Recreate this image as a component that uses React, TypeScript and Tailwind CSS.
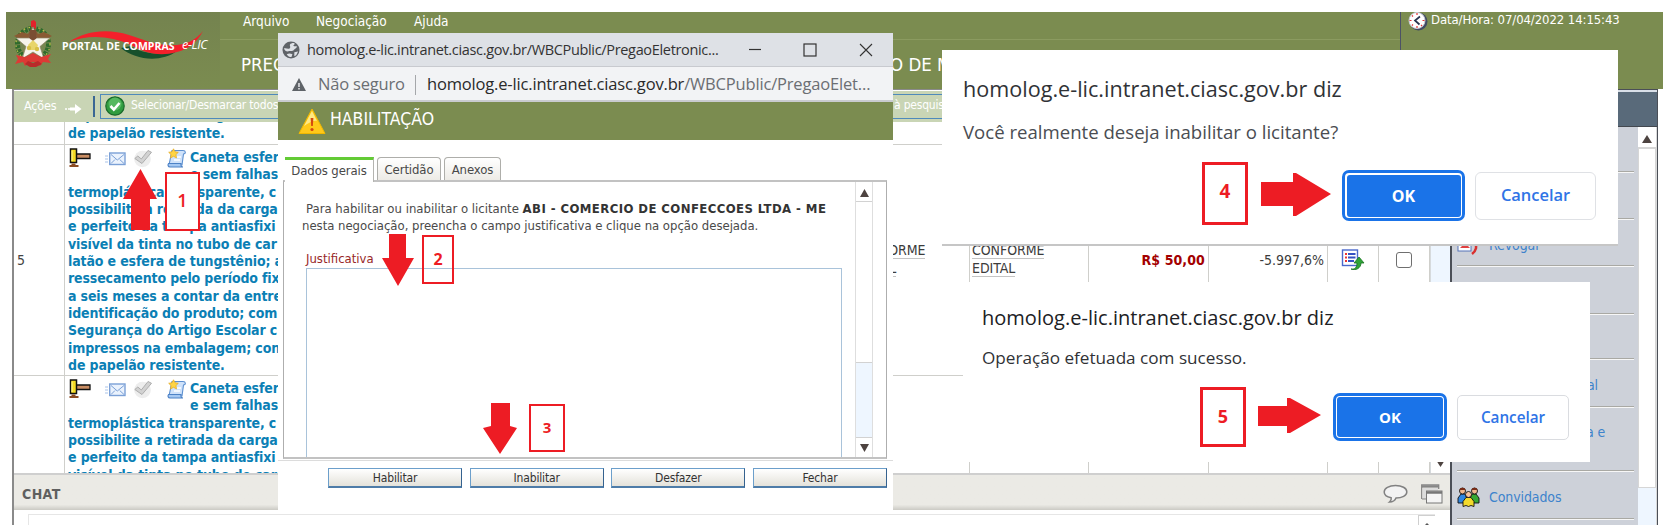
import React from "react";

const tahoma = "font-['DejaVu_Sans_Condensed','Liberation_Sans',sans-serif]";
const segoe = "font-['Open_Sans','Noto_Sans',sans-serif]";

function Crest() {
  return (
    <svg width="42" height="50" viewBox="0 0 42 50">
      <circle cx="20" cy="25" r="15.5" fill="none" stroke="#2f6b2c" strokeWidth="5" strokeDasharray="3 1" />
      <circle cx="20" cy="25" r="17" fill="none" stroke="#b9c04a" strokeWidth="1.3" strokeDasharray="1.5 3.5" />
      <path d="M18 8V2l3-1 2 2v7z" fill="#e3202b" />
      <path d="M1 17l8-4 6 2 5-8 5 8 6-2 8 4-9 5-3 3H12l-3-4z" fill="#8a5a33" />
      <path d="M20 8l4 11L37 19 27 27.500 31 40 20 33 9 40 13 27.500 3 19l13 0z" fill="#f7f4ea" stroke="#8c8467" strokeWidth=".7" />
      <path d="M17 11h6l1 8-4 3-4-3z" fill="#7a4d33" />
      <path d="M20 21l5 5-2 5h-6l-2-5z" fill="#e8d56a" />
      <circle cx="16" cy="29" r="2.200" fill="#d6bf45" />
      <circle cx="24" cy="30" r="2.200" fill="#d6bf45" />
      <path d="M3 36l9 2 8-4 8 4 10-3-3 5 3 4-8-1-3 4-4-4h-6l-5 4-2-4-8 2 3-5z" fill="#dd3a35" />
      <path d="M12 45l3-3 5 2 5-2 4 3-6 3h-6z" fill="#b92a2a" />
    </svg>
  );
}

function Logo() {
  return (
    <div className="flex h-[77px] w-[214px] shrink-0 bg-gradient-to-b from-[#74834f] to-[#7b8c50] pl-[7px] pt-[7px]">
      <Crest />
      <div className="relative mt-[8px] h-[42px] w-[160px]">
        <svg className="absolute left-0 top-0" width="160" height="42" viewBox="0 0 160 42">
          <path d="M66 21c14 12 40 15 56 3-12 4-34 4-46-5z" fill="#17502c" />
          <path d="M14 15C30 4 52 1 74 8c18 6 34 13 54 9 9-2 15-7 20-13-6 11-14 18-26 21-18 5-32 1-46-7C56 9 34 7 14 15z" fill="#f3202b" />
        </svg>
        <span className="absolute left-[7px] top-[12px] whitespace-nowrap font-['Open_Sans',sans-serif] text-[10.500px] font-bold leading-[14px] tracking-[0.050px] text-white">PORTAL DE COMPRAS</span>
        <span className="absolute left-[127px] top-[11px] whitespace-nowrap font-['Open_Sans',sans-serif] text-[12.500px] font-medium italic leading-[14px] tracking-[-0.300px] text-white">e-LIC</span>
      </div>
    </div>
  );
}

function Header() {
  return (
    <header className="ml-[6px] flex h-[77px] w-[1657px] bg-[#7b8c50] text-white">
      <Logo />
      <div className="w-[1180px]">
        <nav className="flex h-[28px] items-start border-b border-[#8b9b60] pl-[23px] text-[13.500px] leading-[18px]">
          <span className="w-[73px]">Arquivo</span>
          <span className="w-[98px]">Negociação</span>
          <span>Ajuda</span>
        </nav>
        <div className="flex pl-[21px] pt-[13px] text-[18.500px] leading-[24px]">
          <span className="w-[649px]">PREG</span>
          <span>O DE M</span>
        </div>
      </div>
      <div className="flex h-[38px] border-l border-[#4c5166]">
        <div className="flex h-[18px] items-start pl-[7px]">
          <svg width="20" height="20" viewBox="0 0 20 20">
            <circle cx="10.500" cy="9.500" r="9" fill="#414a63" />
            <circle cx="9" cy="8.500" r="8" fill="#fff" stroke="#c9ced8" />
            <path d="M12 4.500L7 8.500l4.500 4" fill="none" stroke="#27324e" strokeWidth="1.700" />
            <path d="M9 1v2M9 14v2M1.500 8.500h2M14.500 8.500h2M4 3.500l1 1M13 13l1 1M4 13.500l1-1" stroke="#e23333" strokeWidth="1.200" />
          </svg>
          <span className="whitespace-nowrap pl-[3px] text-[13px] leading-[16px] tracking-[-0.080px]">Data/Hora: 07/04/2022 14:15:43</span>
        </div>
      </div>
    </header>
  );
}

function Toolbar() {
  return (
    <div className="flex h-[31px] w-full shrink-0 items-center bg-[#c9d5b5] pb-[1px] text-[12.500px] text-white">
      <span className="w-[51px] pl-[10px] tracking-[-0.200px]">Ações</span>
      <svg className="mt-[6px]" width="17" height="12" viewBox="0 0 17 12">
        <path d="M0 6h2M3 6h2" stroke="#fff" strokeWidth="1.500" />
        <path d="M5 4.500h5V1l6.500 5L10 11V7.500H5z" fill="#fff" />
      </svg>
      <span className="ml-[11px] h-[21px] w-[2px] bg-[#3b6794]" />
      <div className="ml-[5px] flex h-[25px] grow items-center border border-[#4f8abb] pl-[4px]">
        <svg width="20" height="20" viewBox="0 0 20 20">
          <circle cx="10" cy="10" r="9.200" fill="#2f9c3f" stroke="#1b6a2b" strokeWidth="1.200" />
          <circle cx="10" cy="8" r="6.500" fill="#67c46f" opacity=".7" />
          <path d="M5.500 10l3.300 3.500L14.500 7" fill="none" stroke="#fff" strokeWidth="2.600" />
        </svg>
        <span className="mb-[3px] ml-[6px] w-[763px] whitespace-nowrap text-[12px] tracking-[-0.200px]">Selecionar/Desmarcar todos</span>
        <span className="mb-[2px] whitespace-nowrap text-[12px] tracking-[-0.200px]">à pesquis</span>
      </div>
    </div>
  );
}

function RowIcons() {
  return (
    <div className="flex w-[122px] shrink-0 items-start">
      <svg className="-mt-[1px]" width="25" height="21" viewBox="0 0 25 21">
        <path d="M8 6h14v4.500H8z" fill="#c98d63" stroke="#111" strokeWidth="1.300" />
        <path d="M2.500 1h6v13.500h-6z" fill="#f6dc23" stroke="#111" strokeWidth="1.500" />
        <path d="M4 2.500v10.500" stroke="#fff8a0" strokeWidth="1" />
        <path d="M3.500 15.500h4v1.500h3v2h-9v-2h2z" fill="#8a4a21" />
      </svg>
      <svg className="ml-[12px] mt-[3px]" width="21" height="14" viewBox="0 0 21 14">
        <path d="M0 4h3M0 7h3M0 10h3" stroke="#a9c4ea" strokeWidth="1.200" />
        <rect x="4.700" y="1" width="15.300" height="11.500" fill="#eaf2fd" stroke="#7ba0d6" strokeWidth="1.400" />
        <path d="M6 2.500l6.300 5.500L19 2.500M6 11.500l4-4M19 11.500l-4.300-4" fill="none" stroke="#7ba0d6" />
      </svg>
      <svg className="ml-[7px]" width="20" height="19" viewBox="0 0 20 19">
        <circle cx="9.500" cy="10" r="8.300" fill="#ededed" />
        <path d="M1.800 9.500l3-2.500 3.500 3L15 1.500l3.500 1.800L9 14.500z" fill="#d2d2d2" stroke="#adadad" />
      </svg>
      <svg className="-mt-[1px] ml-[14px]" width="20" height="20" viewBox="0 0 20 20">
        <path d="M5 2.500h11c3 0 3 3.500.5 3.500L15 17H2z" fill="#cfe2fa" stroke="#5b8fd0" strokeWidth="1.100" />
        <path d="M1.500 15.500h12.500c-.5 2 .5 3.500 2 3.500H3c-2 0-2.500-2-1.500-3.500z" fill="#a5c8f2" stroke="#4d82c6" strokeWidth="1.100" />
        <path d="M8 9h6M7 12h6" stroke="#fff" strokeWidth="1.300" />
        <path d="M6.500.8l1.500 3 3.300.5-2.400 2.300.6 3.300-3-1.600-3 1.600.6-3.300L1.700 4.300 5 3.800z" fill="#ffd544" stroke="#e5ac26" strokeWidth=".8" />
      </svg>
    </div>
  );
}

const longLines = [
  "possibilite a retirada da carga",
  "e perfeito da tampa antiasfixi",
  "visível da tinta no tubo de car",
  "latão e esfera de tungstênio; a",
  "ressecamento pelo período fix",
  "a seis meses a contar da entre",
  "identificação do produto; com",
  "Segurança do Artigo Escolar c",
  "impressos na embalagem; con",
  "de papelão resistente.",
];

const itemText = "text-[14px] font-bold leading-[17.330px] tracking-[-0.140px] text-[#0b7fb5] whitespace-nowrap";

function Description({ lines }: { lines: string[] }) {
  return (
    <div className={`${itemText} pl-[3px] pt-[4px]`}>
      <div className="flex">
        <RowIcons />
        <div>
          <div>Caneta esfer</div>
          <div>e sem falhas</div>
        </div>
      </div>
      <div>termoplástica transparente, c</div>
      {lines.map((l) => (
        <div key={l}>{l}</div>
      ))}
    </div>
  );
}

const gridCols = "grid grid-cols-[51px_786px_119px_119px_120px_119px_51px_51px]";
const cell = "border-r border-[#cfcfcb]";

function Underlined() {
  return (
    <div className="flex flex-col items-start pl-[2px] text-[14px] leading-[14px] tracking-[-0.050px] text-[#3c3c3c]">
      <span className="border-b border-[#c4c4c4] pb-[1px]">CONFORME</span>
      <span className="mt-[2px] border-b border-[#c4c4c4] pb-[1px]">EDITAL</span>
    </div>
  );
}

function Table() {
  return (
    <div className="flex h-[351px] shrink-0">
      <div className="w-[1416px] overflow-hidden">
        <div className={`${gridCols} h-[23px] border-b border-[#cfcfcb]`}>
          <div className={cell} />
          <div className={`flex h-[22px] flex-col justify-end overflow-hidden border-r border-[#cfcfcb] pb-[2px] pl-[3px] ${itemText}`}>
            <div>impressos na embalagem; con</div>
            <div>de papelão resistente.</div>
          </div>
          {[0, 1, 2, 3, 4, 5].map((i) => (
            <div key={i} className={cell} />
          ))}
        </div>
        <div className={`${gridCols} h-[231px] border-b border-[#cfcfcb]`}>
          <div className={`${cell} flex items-center pl-[3px] text-[14px] text-[#444]`}>5</div>
          <div className={cell}>
            <Description lines={longLines} />
          </div>
          <div className={`${cell} flex items-center`}>
            <Underlined />
          </div>
          <div className={`${cell} flex items-center`}>
            <Underlined />
          </div>
          <div className={`${cell} flex items-center justify-end pr-[3px] text-[14px] font-bold tracking-[0.100px] text-[#a30000]`}>R$ 50,00</div>
          <div className={`${cell} flex items-center justify-end pr-[3px] text-[14px] text-[#3c3c3c]`}>-5.997,6%</div>
          <div className={`${cell} flex items-center justify-center pb-[2px]`}>
            <svg width="24" height="21" viewBox="0 0 24 21">
              <rect x="1.500" y="1" width="15" height="15.500" fill="#fff" stroke="#4a68cc" strokeWidth="1.400" />
              <path d="M4 5h2M4 8.500h2M4 12h2" stroke="#e33" strokeWidth="1.800" />
              <path d="M7 5h7.500M7 8.500h7.500M7 12h6" stroke="#3451c4" strokeWidth="1.800" />
              <path d="M10 20c4 .5 6-1.500 6-6h-3l5-6 5 6h-3c0 5-5 8-10 6z" fill="#2fa437" stroke="#17701f" strokeWidth=".8" />
            </svg>
          </div>
          <div className={`${cell} flex items-center justify-center`}>
            <span className="h-[16px] w-[16px] rounded-[3px] border-[1.500px] border-[#6f6f6f] bg-white" />
          </div>
        </div>
        <div className={`${gridCols} h-[97px] overflow-hidden`}>
          <div className={cell} />
          <div className="h-[97px] overflow-hidden border-r border-[#cfcfcb]">
            <Description lines={longLines.slice(0, 3)} />
          </div>
          {[0, 1, 2, 3, 4, 5].map((i) => (
            <div key={i} className={cell} />
          ))}
        </div>
      </div>
      <div className="flex w-[20px] flex-col justify-end border-l border-[#d6dadd] bg-[#eef6ff]">
        <div className="flex h-[20px] items-center justify-center bg-white">
          <svg width="9" height="7" viewBox="0 0 9 7"><path d="M0 0h9L4.500 7z" fill="#4d4340" /></svg>
        </div>
      </div>
    </div>
  );
}

function Chat() {
  return (
    <>
      <div className="flex h-[37px] shrink-0 items-center border-t-2 border-[#cfcfcf] bg-gradient-to-b from-[#ebeae5] from-85% to-[#cbcac4] pl-[8px] pr-[7px] pt-[2px]">
        <span className="grow pt-[2px] text-[14px] font-bold tracking-[0.400px] text-[#5f5f5f]">CHAT</span>
        <svg width="25" height="20" viewBox="0 0 25 20">
          <path d="M12.500 1.500C6 1.500 1.200 4.200 1.200 8c0 3 3 5 7 5.800.4 2-.7 3.400-1.700 4.200 3 0 5.500-1.500 6.500-4C19 14 23.800 11.500 23.800 8c0-4-5-6.500-11.300-6.500z" fill="#f3f3f3" stroke="#818181" strokeWidth="1.500" />
        </svg>
        <svg className="ml-[13px]" width="22" height="20" viewBox="0 0 22 20">
          <path d="M.7 15V1h17v4" fill="none" stroke="#868686" strokeWidth="1.300" />
          <path d="M1 2.500h17" stroke="#868686" strokeWidth="2.200" />
          <path d="M1.500 4h15.500v3H5v8H1.500z" fill="#dcdcdc" />
          <path d="M1 15h4" stroke="#868686" />
          <rect x="5.500" y="7" width="15.500" height="12" fill="#f4f4f4" stroke="#777" />
          <path d="M5.500 8.500H21" stroke="#777" strokeWidth="2.500" />
        </svg>
      </div>
      <div className="ml-[14px] mt-[4px] flex h-[11px] w-[1407px] justify-end overflow-hidden border-l border-t border-[#e6e6e6]">
        <div className="flex w-[17px] items-end justify-center border-l border-t border-[#cfcfcf]">
          <svg width="4" height="2" viewBox="0 0 4 2"><path d="M2 0l2 2H0z" fill="#555" /></svg>
        </div>
      </div>
    </>
  );
}

const sep = "border-b border-[#a9a9a4] shadow-[0_1px_0_#f7f7f7]";

function SideMenu() {
  return (
    <aside className="flex h-[436px] w-[208px] shrink-0 flex-col border-l-2 border-r-[1px] border-t border-[#4b4f57]">
      <div className="h-[37px] shrink-0 border-b border-t-2 border-b-[#43484f] border-t-[#d9dfe8] bg-[#596a7a]" />
      <div className="flex grow overflow-hidden">
        <div className="w-[186px] bg-[#cdd1d9] pl-[5px] pr-[4px] text-[14px] tracking-[-0.100px] text-[#3d83cc]">
          <div className={`h-[45px] ${sep}`} />
          <div className={`h-[47px] ${sep}`} />
          <div className={`flex h-[47px] items-center pt-[7px] ${sep}`}>
            <svg width="22" height="20" viewBox="0 0 22 20">
              <rect x="1" y="1" width="13" height="14" fill="#fff" stroke="#5573b8" />
              <path d="M3 12l5-5 5 5z" fill="#e04040" />
              <path d="M17 5c4 5 2 10-2 13" fill="none" stroke="#d9302f" strokeWidth="2.500" />
            </svg>
            <span className="pl-[10px]">Revogar</span>
          </div>
          <div className={`h-[48px] ${sep}`} />
          <div className={`h-[45px] ${sep}`} />
          <div className={`flex h-[48px] items-center pl-[130px] pt-[5px] ${sep}`}>al</div>
          <div className={`flex h-[64px] items-center whitespace-nowrap pl-[129px] pb-[13px] ${sep}`}>a e</div>
          <div className={`flex h-[48px] items-center pt-[4px] ${sep}`}>
            <svg width="23" height="20" viewBox="0 0 23 20">
              <g stroke="#111" strokeWidth=".9">
                <path d="M1 16v-5l3-4h4l2 5v4z" fill="#2e86e0" />
                <path d="M13 16v-5l2-4h4l3 4v5z" fill="#37a834" />
                <circle cx="5.500" cy="4" r="3" fill="#f2b78c" />
                <circle cx="17.500" cy="4" r="3" fill="#f2b78c" />
                <path d="M6 19.500v-5l3-4h5l3 4v5l-3-1-2.500 1-2.500-1z" fill="#f3da2c" />
                <circle cx="11.500" cy="7.500" r="3" fill="#f6c39b" />
              </g>
              <path d="M2.500 3C3 0 8 0 8.500 3zM14.500 3c.5-3 5.500-3 6 0z" fill="#7a2c16" />
            </svg>
            <span className="pl-[9px] pt-[1px]">Convidados</span>
          </div>
        </div>
        <div className="flex w-[19px] flex-col border-r border-[#dadada] bg-[#eef6ff]">
          <div className="flex h-[20px] items-center justify-center bg-white pt-[3px]">
            <svg width="10" height="8" viewBox="0 0 10 8"><path d="M5 0l5 8H0z" fill="#4d4340" /></svg>
          </div>
          <div className="h-[341px] border border-t-2 border-[#d6d6d6] bg-white" />
        </div>
      </div>
    </aside>
  );
}

function PopupButton({ label }: { label: string }) {
  return (
    <button className="h-[20px] w-[134px] border border-b-2 border-[#6c9fcb] border-b-[#4e7ca8] border-r-[#35628f] bg-gradient-to-b from-white to-[#e4e2da] text-[12px] leading-[19px] tracking-[-0.150px] text-[#333]">
      {label}
    </button>
  );
}

function Popup() {
  return (
    <section className="absolute left-[278px] top-[33px] flex h-[480px] w-[615px] flex-col bg-white">
      <div className={`flex h-[34px] shrink-0 items-center border-b border-[#c8cacf] bg-[#dee1e6] pl-[4px] pr-[20px] ${segoe}`}>
        <svg width="18" height="18" viewBox="0 0 19 19">
          <circle cx="9.500" cy="9.500" r="9" fill="#5f6368" />
          <path d="M2 8c2-1 4 1 6 0 2-2-1-3 1-5 1-1 3-1 4-1 1 2-1 2-1 3 1 1 3 0 4 1-1 2-3 2-4 4-2 1-4 0-6 1-2 0-3-1-4-3zM5 14c2-1 4-1 6 0l-1 3c-2 0-4-1-5-3zM13 12l4-1-2 4-2 1z" fill="#dee1e6" />
        </svg>
        <span className="grow whitespace-nowrap pl-[7px] text-[14.500px] tracking-[-0.330px] text-[#333]">homolog.e-lic.intranet.ciasc.gov.br/WBCPublic/PregaoEletronic...</span>
        <svg width="124" height="16" viewBox="0 0 124 16" fill="none" stroke="#333">
          <path d="M0 7.500h12" strokeWidth="1.200" />
          <rect x="55" y="2" width="12" height="12" strokeWidth="1.200" />
          <path d="M111 2l12 12M123 2l-12 12" strokeWidth="1.100" />
        </svg>
      </div>
      <div className={`flex h-[35px] shrink-0 items-center border-b-2 border-[#c9cbcf] bg-[#f2f3f5] pl-[14px] pt-[2px] text-[16.500px] ${segoe}`}>
        <svg width="14" height="13" viewBox="0 0 14 13"><path d="M7 0l7 13H0z" fill="#5f6368" /><path d="M7 5v4M7 10v1.500" stroke="#f2f3f5" strokeWidth="1.400" /></svg>
        <span className="ml-[12px] w-[88px] whitespace-nowrap tracking-[-0.200px] text-[#6b6e73]">Não seguro</span>
        <span className="ml-[9px] h-[20px] w-[1px] bg-[#a5a7aa]" />
        <span className="ml-[11px] whitespace-nowrap tracking-[-0.170px] text-[#2a2a2a]">homolog.e-lic.intranet.ciasc.gov.br<span className="text-[#6b6e73]">/WBCPublic/PregaoElet...</span></span>
      </div>
      <div className="flex h-[38px] shrink-0 items-center bg-[#7b8c50] pl-[20px]">
        <svg width="28" height="27" viewBox="0 0 28 27">
          <path d="M14 1l13 24.500H1z" fill="#ffc91a" stroke="#f0b800" />
          <path d="M14 3l5 10c-5-1-9 3-13 5z" fill="#fff3a8" opacity=".75" />
          <path d="M12.600 10h2.800l-.6 8h-1.600z" fill="#d4470f" />
          <circle cx="14" cy="21.500" r="1.600" fill="#d4470f" />
        </svg>
        <span className="pb-[5px] pl-[4px] text-[17.500px] leading-[22px] text-white">HABILITAÇÃO</span>
      </div>
      <div className="mt-[17px] flex h-[23px] shrink-0 gap-[3px] pl-[7px] text-[13px] tracking-[-0.100px] text-[#484848]">
        <div className="z-10 h-[25px] w-[89px] border-r border-t-[3px] border-[#b4b4b0] border-t-[#63cb35] bg-white text-center leading-[21px]">Dados gerais</div>
        <div className="w-[64px] rounded-t-[4px] border border-b-0 border-[#aeaeaa] bg-gradient-to-b from-white to-[#edebe6] text-center leading-[23px]">Certidão</div>
        <div className="w-[57px] rounded-t-[4px] border border-b-0 border-[#aeaeaa] bg-gradient-to-b from-white to-[#edebe6] text-center leading-[23px]">Anexos</div>
      </div>
      <div className="ml-[5px] flex h-[279px] w-[604px] shrink-0 border border-b-2 border-t-2 border-[#aeaeae] border-t-[#c2c2c2] border-b-[#c2c2c2]">
        <div className="flex w-[571px] flex-col pl-[18px] text-[13px] text-[#4a4a4a]">
          <p className="whitespace-nowrap pl-[4px] pt-[19px] leading-[16.500px]">
            <span className="tracking-[0px]">Para habilitar ou inabilitar o licitante </span>
            <b className="tracking-[0.420px] text-[#333]">ABI - COMERCIO DE CONFECCOES LTDA - ME</b>
          </p>
          <p className="whitespace-nowrap leading-[16.500px] tracking-[-0.020px]">nesta negociação, preencha o campo justificativa e clique na opção desejada.</p>
          <label className="mt-[17px] pl-[4px] leading-[16px] text-[#982828]">Justificativa</label>
          <div className="ml-[4px] mt-[1px] w-[536px] grow border border-b-0 border-[#a9c3da]" />
        </div>
        <div className="flex w-[18px] flex-col border-x border-[#dedede] bg-[#eef6ff]">
          <div className="flex h-[20px] items-center justify-center border-b border-[#d2d2d2] bg-white pt-[3px]">
            <svg width="9" height="8" viewBox="0 0 9 8"><path d="M4.500 0L9 8H0z" fill="#4d4340" /></svg>
          </div>
          <div className="h-[161px] border-b border-[#d2d2d2] bg-white" />
          <div className="mt-auto flex h-[20px] items-center justify-center border-t border-[#d2d2d2] bg-white">
            <svg width="9" height="8" viewBox="0 0 9 8"><path d="M0 0h9L4.500 8z" fill="#4d4340" /></svg>
          </div>
        </div>
      </div>
      <div className="mt-[1px] flex justify-between border-t border-[#dcdcdc] pl-[50px] pr-[6px] pt-[7px]">
        <PopupButton label="Habilitar" />
        <PopupButton label="Inabilitar" />
        <PopupButton label="Desfazer" />
        <PopupButton label="Fechar" />
      </div>
    </section>
  );
}

function ConfirmDialog() {
  return (
    <section className={`absolute left-[942px] top-[50px] flex h-[196px] w-[676px] flex-col border-b-2 border-[#c6c6c6] bg-white pl-[21px] pr-[22px] pt-[24px] ${segoe}`}>
      <h2 className="text-[21.600px] leading-[30px] text-[#303236]">homolog.e-lic.intranet.ciasc.gov.br diz</h2>
      <p className="mt-[15px] text-[18.600px] leading-[26px] text-[#4a4d52]">Você realmente deseja inabilitar o licitante?</p>
      <div className="mt-[25px] flex items-center justify-end gap-[10px] text-[16px]">
        <button className="h-[51px] w-[123px] rounded-[7px] border-[3px] border-[#1a73e8] bg-white p-[1.500px]">
          <span className="flex h-full items-center justify-center rounded-[3px] bg-[#1a73e8] font-bold text-white">OK</span>
        </button>
        <button className="h-[48px] w-[121px] rounded-[6px] border border-[#dfe1e5] text-[16.500px] font-semibold tracking-[-0.050px] text-[#2f74e6]">Cancelar</button>
      </div>
    </section>
  );
}

function SuccessDialog() {
  return (
    <section className={`absolute left-[963px] top-[282px] flex h-[180px] w-[627px] flex-col bg-white pl-[19px] pr-[21px] pt-[22px] ${segoe}`}>
      <h2 className="text-[20px] leading-[28px] tracking-[0.020px] text-[#202124]">homolog.e-lic.intranet.ciasc.gov.br diz</h2>
      <p className="mt-[14px] text-[17.150px] leading-[24px] text-[#303236]">Operação efetuada com sucesso.</p>
      <div className="mt-[23px] flex items-center justify-end gap-[10px] text-[15px]">
        <button className="h-[48px] w-[114px] rounded-[7px] border-[3px] border-[#1a73e8] bg-white p-[1px]">
          <span className="flex h-full items-center justify-center rounded-[3px] bg-[#1a73e8] font-bold text-white">OK</span>
        </button>
        <button className="h-[45px] w-[112px] rounded-[5px] border border-[#dadce0] text-[15.300px] font-semibold tracking-[-0.050px] text-[#2f74e6]">Cancelar</button>
      </div>
    </section>
  );
}

const mark = `absolute flex items-center justify-center border-[#ed1c24] text-[#ed1c24] ${segoe}`;

export default function App() {
  return (
    <div className={`relative h-[528px] w-[1666px] overflow-hidden bg-white pt-[12px] ${tahoma}`}>
      <Header />
      <div className="ml-[12px] flex h-[436px] overflow-hidden">
        <main className="flex w-[1438px] shrink-0 flex-col overflow-hidden border-l-2 border-t border-[#8a8a8a] pt-[1px]">
          <Toolbar />
          <Table />
          <Chat />
        </main>
        <SideMenu />
      </div>

      <Popup />
      <ConfirmDialog />
      <SuccessDialog />

      <svg className="absolute left-0 top-0" width="1666" height="528" viewBox="0 0 1666 528" fill="#ed1c24">
        <path d="M140.500 169L157 199h-7v31h-19v-31h-8z" />
        <path d="M389 234h17v24h8l-16 28-16-28h7z" />
        <path d="M491 403h19v23l7 2-17 26-17-26 8-2z" />
        <path d="M1261 182h32v-9h3l35 21-35 22h-3v-10h-32z" />
        <path d="M1258 406h29v-8h3l31 17-31 18h-3v-7h-29z" />
      </svg>
      <div className={`${mark} left-[165px] top-[172px] h-[59px] w-[35px] border-2 bg-white pb-[2px] text-[18px] font-semibold`}>1</div>
      <div className={`${mark} left-[422px] top-[235px] h-[49px] w-[32px] border-2 pb-[2px] text-[16px] font-bold`}>2</div>
      <div className={`${mark} left-[529px] top-[404px] h-[48px] w-[36px] border-2 pb-[2px] text-[15px] font-bold`}>3</div>
      <div className={`${mark} left-[1202px] top-[162px] h-[63px] w-[46px] border-[3px] pb-[4px] text-[19px] font-bold`}>4</div>
      <div className={`${mark} left-[1200px] top-[387px] h-[60px] w-[46px] border-[3px] pb-[2px] text-[18px] font-bold`}>5</div>
    </div>
  );
}
